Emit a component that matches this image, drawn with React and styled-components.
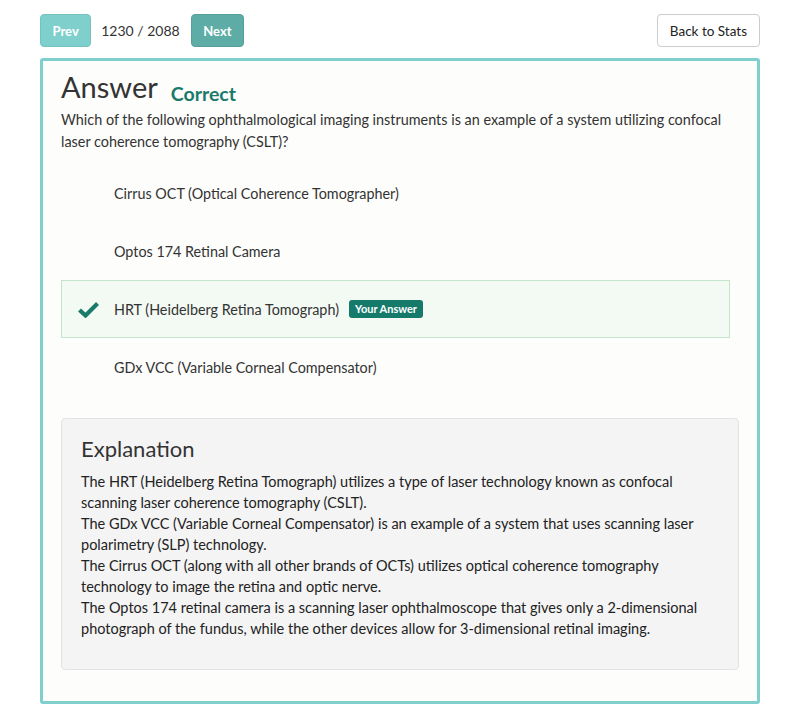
import styled, { createGlobalStyle } from "styled-components";

const GlobalStyle = createGlobalStyle`
  body {
    margin: 0;
    background: #ffffff;
    font-family: Lato, "Open Sans", sans-serif;
    color: #333333;
  }
`;

const options = [
  { id: 1, text: "Cirrus OCT (Optical Coherence Tomographer)" },
  { id: 2, text: "Optos 174 Retinal Camera" },
  { id: 3, text: "HRT (Heidelberg Retina Tomograph)", chosen: true },
  { id: 4, text: "GDx VCC (Variable Corneal Compensator)" },
];

const explanation = [
  "The HRT (Heidelberg Retina Tomograph) utilizes a type of laser technology known as confocal scanning laser coherence tomography (CSLT).",
  "The GDx VCC (Variable Corneal Compensator) is an example of a system that uses scanning laser polarimetry (SLP) technology.",
  "The Cirrus OCT (along with all other brands of OCTs) utilizes optical coherence tomography technology to image the retina and optic nerve.",
  "The Optos 174 retinal camera is a scanning laser ophthalmoscope that gives only a 2-dimensional photograph of the fundus, while the other devices allow for 3-dimensional retinal imaging.",
];

const Check = () => (
  <svg width="21" height="17" viewBox="0 0 21 17">
    <path d="M1.5 9 L7.5 14.5 L19.5 2.5" fill="none" stroke="#1a7a6a" strokeWidth="4.2" strokeLinecap="butt" />
  </svg>
);

const App = () => {
  return (
    <>
      <GlobalStyle />
      <Page>
        <Toolbar>
          <NavButton $dim>Prev</NavButton>
          <Counter>1230 / 2088</Counter>
          <NavButton>Next</NavButton>
          <Spacer />
          <BackButton>Back to Stats</BackButton>
        </Toolbar>

        <Card>
          <TitleRow>
            <Title>Answer</Title>
            <Result>Correct</Result>
          </TitleRow>
          <Question>
            Which of the following ophthalmological imaging instruments is an example of a system utilizing confocal
            laser coherence tomography (CSLT)?
          </Question>

          <OptionList>
            {options.map((o) => (
              <Option key={o.id} $chosen={o.chosen}>
                <Mark>{o.chosen && <Check />}</Mark>
                <span>{o.text}</span>
                {o.chosen && <Badge>Your Answer</Badge>}
              </Option>
            ))}
          </OptionList>

          <Explanation>
            <ExplTitle>Explanation</ExplTitle>
            {explanation.map((line, i) => (
              <ExplLine key={i}>{line}</ExplLine>
            ))}
          </Explanation>
        </Card>
      </Page>
    </>
  );
};

const Page = styled.div`
  width: 720px;
  padding: 14px 40px 24px;
`;

const Toolbar = styled.div`
  display: flex;
  align-items: center;
  height: 33px;
  margin-bottom: 11px;
`;

const NavButton = styled.div`
  height: 33px;
  padding: 0 11.5px;
  display: flex;
  align-items: center;
  border-radius: 4px;
  font-size: 13px;
  font-weight: 700;
  color: #ffffff;
  background: ${(p) => (p.$dim ? "#7fcfcc" : "#5eaca6")};
  border: 1px solid ${(p) => (p.$dim ? "#74c3c0" : "#559f99")};
  box-sizing: border-box;
`;

const Counter = styled.span`
  font-size: 14px;
  color: #333;
  margin: 0 11px 0 10px;
`;

const Spacer = styled.div`
  flex: 1;
`;

const BackButton = styled.div`
  height: 33px;
  box-sizing: border-box;
  padding: 0 12px;
  display: flex;
  align-items: center;
  border: 1px solid #cccccc;
  border-radius: 4px;
  background: #ffffff;
  font-size: 13.5px;
  color: #222;
`;

const Card = styled.div`
  border: 3px solid #7fcfcc;
  border-radius: 3px;
  background: #fdfdfb;
  padding: 6px 18px 31px 18px;
`;

const TitleRow = styled.div`
  display: flex;
  align-items: baseline;
`;

const Title = styled.h1`
  margin: 0;
  font-size: 29px;
  font-weight: 400;
  color: #333;
  line-height: 40px;
`;

const Result = styled.span`
  margin-left: 13px;
  font-size: 19.5px;
  font-weight: 700;
  color: #1a7a6a;
  position: relative;
  top: 3px;
`;

const Question = styled.p`
  margin: 2px 0 0;
  font-size: 14.4px;
  line-height: 22px;
  color: #333;
`;

const OptionList = styled.div`
  margin: 11px 9px 22px 0;
`;

const Option = styled.div`
  display: flex;
  align-items: center;
  height: 58px;
  box-sizing: border-box;
  padding-left: 16px;
  font-size: 14.35px;
  color: #333;
  border: 1px solid ${(p) => (p.$chosen ? "#c3e6cb" : "transparent")};
  background: ${(p) => (p.$chosen ? "#f3faf4" : "transparent")};
`;

const Mark = styled.div`
  width: 36px;
  display: flex;
  align-items: center;
`;

const Badge = styled.span`
  margin-left: 10px;
  background: #167a6a;
  color: #fff;
  font-size: 11px;
  font-weight: 700;
  padding: 2px 6px 3px;
  border-radius: 3px;
`;

const Explanation = styled.div`
  background: #f4f4f4;
  border: 1px solid #e2e2e2;
  border-radius: 4px;
  padding: 15px 19px 30px;
`;

const ExplTitle = styled.h2`
  margin: 0 0 7px;
  font-size: 22px;
  font-weight: 400;
  color: #333;
  line-height: 30px;
`;

const ExplLine = styled.p`
  margin: 0;
  font-size: 14.5px;
  line-height: 21px;
  color: #222;
`;

export default App;
